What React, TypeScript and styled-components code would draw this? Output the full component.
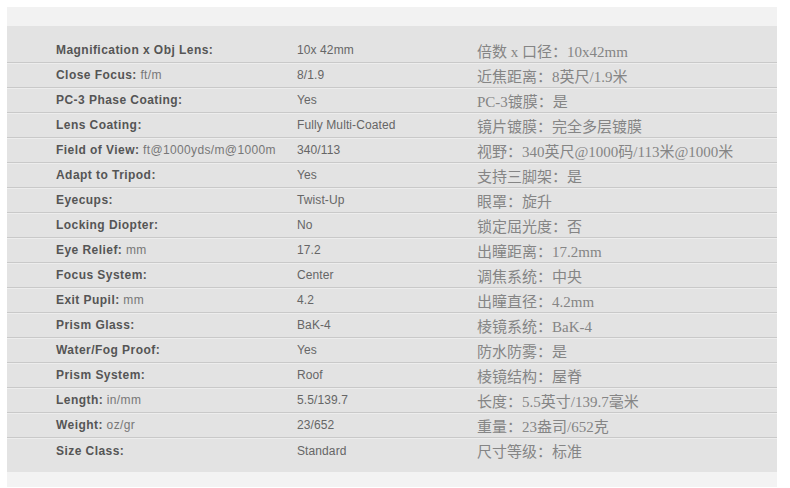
import React from 'react'
import styled, { createGlobalStyle } from 'styled-components'

interface Spec {
    label: string;
    unit?: string;
    value: string;
    cn: string;
}

const specs: Spec[] = [
    { label: 'Magnification x Obj Lens:', value: '10x 42mm', cn: '倍数 x 口径：10x42mm' },
    { label: 'Close Focus:', unit: 'ft/m', value: '8/1.9', cn: '近焦距离：8英尺/1.9米' },
    { label: 'PC-3 Phase Coating:', value: 'Yes', cn: 'PC-3镀膜：是' },
    { label: 'Lens Coating:', value: 'Fully Multi-Coated', cn: '镜片镀膜：完全多层镀膜' },
    { label: 'Field of View:', unit: 'ft@1000yds/m@1000m', value: '340/113', cn: '视野：340英尺@1000码/113米@1000米' },
    { label: 'Adapt to Tripod:', value: 'Yes', cn: '支持三脚架：是' },
    { label: 'Eyecups:', value: 'Twist-Up', cn: '眼罩：旋升' },
    { label: 'Locking Diopter:', value: 'No', cn: '锁定屈光度：否' },
    { label: 'Eye Relief:', unit: 'mm', value: '17.2', cn: '出瞳距离：17.2mm' },
    { label: 'Focus System:', value: 'Center', cn: '调焦系统：中央' },
    { label: 'Exit Pupil:', unit: 'mm', value: '4.2', cn: '出瞳直径：4.2mm' },
    { label: 'Prism Glass:', value: 'BaK-4', cn: '棱镜系统：BaK-4' },
    { label: 'Water/Fog Proof:', value: 'Yes', cn: '防水防雾：是' },
    { label: 'Prism System:', value: 'Roof', cn: '棱镜结构：屋脊' },
    { label: 'Length:', unit: 'in/mm', value: '5.5/139.7', cn: '长度：5.5英寸/139.7毫米' },
    { label: 'Weight:', unit: 'oz/gr', value: '23/652', cn: '重量：23盎司/652克' },
    { label: 'Size Class:', value: 'Standard', cn: '尺寸等级：标准' },
]

const GlobalStyle = createGlobalStyle`
    body {
        margin: 0;
        background: #ffffff;
    }
`

const App = () => {
    return (
        <Page>
            <GlobalStyle />
            <Panel>
                <TopStrip />
                <SpecTable>
                    {specs.map((s, i) => (
                        <SpecRow key={i} last={i === specs.length - 1}>
                            <Label>
                                {s.label}
                                {s.unit && <Unit> {s.unit}</Unit>}
                            </Label>
                            <Value>{s.value}</Value>
                            <Chinese>{s.cn}</Chinese>
                        </SpecRow>
                    ))}
                </SpecTable>
                <BottomStrip />
            </Panel>
        </Page>
    )
}

const Page = styled.div`
    padding: 7px 13px 0 7px;
    background: #ffffff;
`

const Panel = styled.div`
    width: 770px;
    display: flex;
    flex-direction: column;
`

const TopStrip = styled.div`
    height: 19px;
    background: #f2f2f2;
`

const SpecTable = styled.div`
    background: #e3e3e3;
    padding: 12px 0 9px;
`

const SpecRow = styled.div<{ last?: boolean }>`
    display: grid;
    grid-template-columns: 241px 180px 1fr;
    align-items: center;
    height: 25px;
    box-sizing: border-box;
    padding-left: 49px;
    border-bottom: ${p => (p.last ? 'none' : '1px solid #c9c9c9')};
    box-shadow: ${p => (p.last ? 'none' : '0 1px 0 #ededed')};
`

const Label = styled.div`
    font-family: "Liberation Sans", Arial, sans-serif;
    font-weight: bold;
    font-size: 12px;
    letter-spacing: 0.45px;
    color: #555555;
    white-space: nowrap;
`

const Unit = styled.span`
    font-weight: normal;
    letter-spacing: 0.35px;
    color: #777777;
`

const Value = styled.div`
    font-family: "Liberation Sans", Arial, sans-serif;
    font-size: 12px;
    letter-spacing: 0.1px;
    color: #666666;
    white-space: nowrap;
`

const Chinese = styled.div`
    font-family: "Liberation Serif", "Noto Sans CJK SC", serif;
    font-size: 15px;
    color: #858585;
    white-space: nowrap;
`

const BottomStrip = styled.div`
    height: 15px;
    background: #f3f3f3;
`

export default App
